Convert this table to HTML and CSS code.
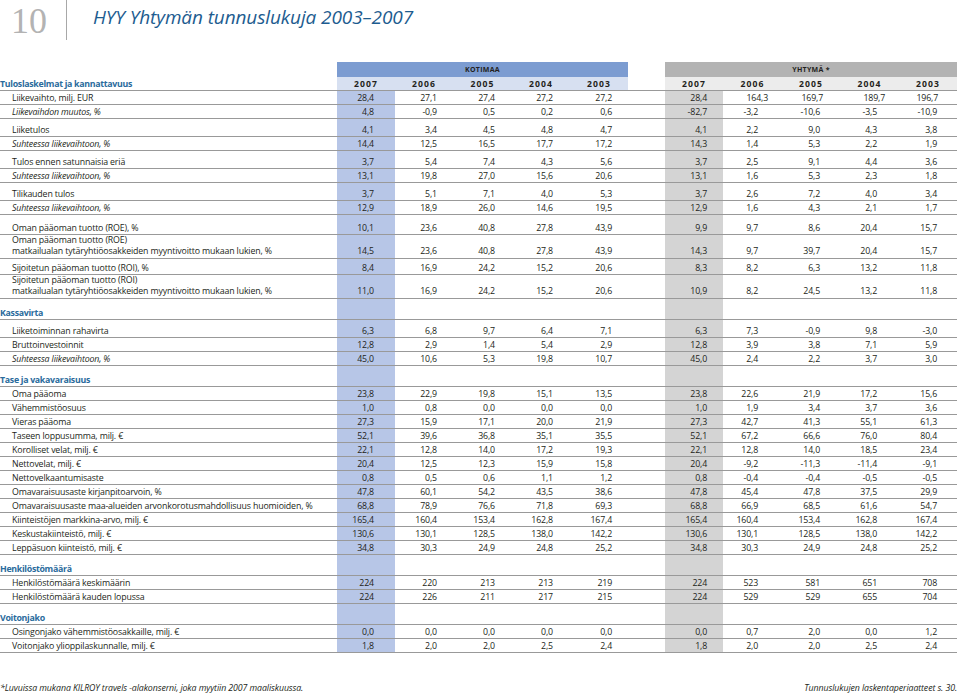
FILE: index.html
```html
<!DOCTYPE html>
<html lang="fi">
<head>
<meta charset="utf-8">
<title>HYY Yhtymän tunnuslukuja 2003–2007</title>
<link rel="stylesheet" href="styles.css">
</head>
<body>
<div class="top">
  <div class="pagenum">10</div>
  <div class="vline"></div>
  <h1 class="title">HYY Yhtymän tunnuslukuja 2003–2007</h1>
</div>
<table class="kt">
  <colgroup>
    <col class="cl"><col class="ck"><col class="ck"><col class="ck3"><col class="ck"><col class="ck">
    <col class="cg"><col class="ck"><col class="ck3"><col class="ck"><col class="ck3"><col class="ck">
  </colgroup>
  <thead>
    <tr class="band">
      <td></td><td colspan="5" class="bk">KOTIMAA</td><td></td><td colspan="5" class="by">YHTYMÄ *</td>
    </tr>
    <tr class="years">
      <td class="sh">Tuloslaskelmat ja kannattavuus</td>
      <td class="yk">2007</td><td class="yk">2006</td><td class="yk">2005</td><td class="yk">2004</td><td class="yk">2003</td>
      <td></td>
      <td class="yy">2007</td><td class="yy">2006</td><td class="yy">2005</td><td class="yy">2004</td><td class="yy">2003</td>
    </tr>
  </thead>
  <tbody class="up">
    <tr class="first"><td class="l">Liikevaihto, milj. EUR</td><td>28,4</td><td>27,1</td><td>27,4</td><td>27,2</td><td>27,2</td><td></td><td>28,4</td><td>164,3</td><td>169,7</td><td>189,7</td><td>196,7</td></tr>
    <tr class="it"><td class="l">Liikevaihdon muutos, %</td><td>4,8</td><td>-0,9</td><td>0,5</td><td>0,2</td><td>0,6</td><td></td><td>-82,7</td><td>-3,2</td><td>-10,6</td><td>-3,5</td><td>-10,9</td></tr>
    <tr class="g1"><td class="l">Liiketulos</td><td>4,1</td><td>3,4</td><td>4,5</td><td>4,8</td><td>4,7</td><td></td><td>4,1</td><td>2,2</td><td>9,0</td><td>4,3</td><td>3,8</td></tr>
    <tr class="it"><td class="l">Suhteessa liikevaihtoon, %</td><td>14,4</td><td>12,5</td><td>16,5</td><td>17,7</td><td>17,2</td><td></td><td>14,3</td><td>1,4</td><td>5,3</td><td>2,2</td><td>1,9</td></tr>
    <tr class="g1"><td class="l">Tulos ennen satunnaisia eriä</td><td>3,7</td><td>5,4</td><td>7,4</td><td>4,3</td><td>5,6</td><td></td><td>3,7</td><td>2,5</td><td>9,1</td><td>4,4</td><td>3,6</td></tr>
    <tr class="it"><td class="l">Suhteessa liikevaihtoon, %</td><td>13,1</td><td>19,8</td><td>27,0</td><td>15,6</td><td>20,6</td><td></td><td>13,1</td><td>1,6</td><td>5,3</td><td>2,3</td><td>1,8</td></tr>
    <tr class="g1"><td class="l">Tilikauden tulos</td><td>3,7</td><td>5,1</td><td>7,1</td><td>4,0</td><td>5,3</td><td></td><td>3,7</td><td>2,6</td><td>7,2</td><td>4,0</td><td>3,4</td></tr>
    <tr class="it"><td class="l">Suhteessa liikevaihtoon, %</td><td>12,9</td><td>18,9</td><td>26,0</td><td>14,6</td><td>19,5</td><td></td><td>12,9</td><td>1,6</td><td>4,3</td><td>2,1</td><td>1,7</td></tr>
    <tr class="g2"><td class="l">Oman pääoman tuotto (ROE), %</td><td>10,1</td><td>23,6</td><td>40,8</td><td>27,8</td><td>43,9</td><td></td><td>9,9</td><td>9,7</td><td>8,6</td><td>20,4</td><td>15,7</td></tr>
    <tr class="two"><td class="l">Oman pääoman tuotto (ROE)<br>matkailualan tytäryhtiöosakkeiden myyntivoitto mukaan lukien, %</td><td>14,5</td><td>23,6</td><td>40,8</td><td>27,8</td><td>43,9</td><td></td><td>14,3</td><td>9,7</td><td>39,7</td><td>20,4</td><td>15,7</td></tr>
    <tr class="g3"><td class="l">Sijoitetun pääoman tuotto (ROI), %</td><td>8,4</td><td>16,9</td><td>24,2</td><td>15,2</td><td>20,6</td><td></td><td>8,3</td><td>8,2</td><td>6,3</td><td>13,2</td><td>11,8</td></tr>
    <tr class="two"><td class="l">Sijoitetun pääoman tuotto (ROI)<br>matkailualan tytäryhtiöosakkeiden myyntivoitto mukaan lukien, %</td><td>11,0</td><td>16,9</td><td>24,2</td><td>15,2</td><td>20,6</td><td></td><td>10,9</td><td>8,2</td><td>24,5</td><td>13,2</td><td>11,8</td></tr>
  </tbody>
  <tbody class="low">
    <tr class="head"><td class="sh">Kassavirta</td><td></td><td></td><td></td><td></td><td></td><td></td><td></td><td></td><td></td><td></td><td></td></tr>
    <tr class="g1"><td class="l">Liiketoiminnan rahavirta</td><td>6,3</td><td>6,8</td><td>9,7</td><td>6,4</td><td>7,1</td><td></td><td>6,3</td><td>7,3</td><td>-0,9</td><td>9,8</td><td>-3,0</td></tr>
    <tr><td class="l">Bruttoinvestoinnit</td><td>12,8</td><td>2,9</td><td>1,4</td><td>5,4</td><td>2,9</td><td></td><td>12,8</td><td>3,9</td><td>3,8</td><td>7,1</td><td>5,9</td></tr>
    <tr class="it"><td class="l">Suhteessa liikevaihtoon, %</td><td>45,0</td><td>10,6</td><td>5,3</td><td>19,8</td><td>10,7</td><td></td><td>45,0</td><td>2,4</td><td>2,2</td><td>3,7</td><td>3,0</td></tr>
    <tr class="head"><td class="sh">Tase ja vakavaraisuus</td><td></td><td></td><td></td><td></td><td></td><td></td><td></td><td></td><td></td><td></td><td></td></tr>
    <tr><td class="l">Oma pääoma</td><td>23,8</td><td>22,9</td><td>19,8</td><td>15,1</td><td>13,5</td><td></td><td>23,8</td><td>22,6</td><td>21,9</td><td>17,2</td><td>15,6</td></tr>
    <tr><td class="l">Vähemmistöosuus</td><td>1,0</td><td>0,8</td><td>0,0</td><td>0,0</td><td>0,0</td><td></td><td>1,0</td><td>1,9</td><td>3,4</td><td>3,7</td><td>3,6</td></tr>
    <tr><td class="l">Vieras pääoma</td><td>27,3</td><td>15,9</td><td>17,1</td><td>20,0</td><td>21,9</td><td></td><td>27,3</td><td>42,7</td><td>41,3</td><td>55,1</td><td>61,3</td></tr>
    <tr><td class="l">Taseen loppusumma, milj. €</td><td>52,1</td><td>39,6</td><td>36,8</td><td>35,1</td><td>35,5</td><td></td><td>52,1</td><td>67,2</td><td>66,6</td><td>76,0</td><td>80,4</td></tr>
    <tr><td class="l">Korolliset velat, milj. €</td><td>22,1</td><td>12,8</td><td>14,0</td><td>17,2</td><td>19,3</td><td></td><td>22,1</td><td>12,8</td><td>14,0</td><td>18,5</td><td>23,4</td></tr>
    <tr><td class="l">Nettovelat, milj. €</td><td>20,4</td><td>12,5</td><td>12,3</td><td>15,9</td><td>15,8</td><td></td><td>20,4</td><td>-9,2</td><td>-11,3</td><td>-11,4</td><td>-9,1</td></tr>
    <tr><td class="l">Nettovelkaantumisaste</td><td>0,8</td><td>0,5</td><td>0,6</td><td>1,1</td><td>1,2</td><td></td><td>0,8</td><td>-0,4</td><td>-0,4</td><td>-0,5</td><td>-0,5</td></tr>
    <tr><td class="l">Omavaraisuusaste kirjanpitoarvoin, %</td><td>47,8</td><td>60,1</td><td>54,2</td><td>43,5</td><td>38,6</td><td></td><td>47,8</td><td>45,4</td><td>47,8</td><td>37,5</td><td>29,9</td></tr>
    <tr><td class="l">Omavaraisuusaste maa-alueiden arvonkorotusmahdollisuus huomioiden, %</td><td>68,8</td><td>78,9</td><td>76,6</td><td>71,8</td><td>69,3</td><td></td><td>68,8</td><td>66,9</td><td>68,5</td><td>61,6</td><td>54,7</td></tr>
    <tr><td class="l">Kiinteistöjen markkina-arvo, milj. €</td><td>165,4</td><td>160,4</td><td>153,4</td><td>162,8</td><td>167,4</td><td></td><td>165,4</td><td>160,4</td><td>153,4</td><td>162,8</td><td>167,4</td></tr>
    <tr><td class="l">Keskustakiinteistö, milj. €</td><td>130,6</td><td>130,1</td><td>128,5</td><td>138,0</td><td>142,2</td><td></td><td>130,6</td><td>130,1</td><td>128,5</td><td>138,0</td><td>142,2</td></tr>
    <tr><td class="l">Leppäsuon kiinteistö, milj. €</td><td>34,8</td><td>30,3</td><td>24,9</td><td>24,8</td><td>25,2</td><td></td><td>34,8</td><td>30,3</td><td>24,9</td><td>24,8</td><td>25,2</td></tr>
    <tr class="head"><td class="sh">Henkilöstömäärä</td><td></td><td></td><td></td><td></td><td></td><td></td><td></td><td></td><td></td><td></td><td></td></tr>
    <tr><td class="l">Henkilöstömäärä keskimäärin</td><td>224</td><td>220</td><td>213</td><td>213</td><td>219</td><td></td><td>224</td><td>523</td><td>581</td><td>651</td><td>708</td></tr>
    <tr><td class="l">Henkilöstömäärä kauden lopussa</td><td>224</td><td>226</td><td>211</td><td>217</td><td>215</td><td></td><td>224</td><td>529</td><td>529</td><td>655</td><td>704</td></tr>
    <tr class="head"><td class="sh">Voitonjako</td><td></td><td></td><td></td><td></td><td></td><td></td><td></td><td></td><td></td><td></td><td></td></tr>
    <tr><td class="l">Osingonjako vähemmistöosakkaille, milj. €</td><td>0,0</td><td>0,0</td><td>0,0</td><td>0,0</td><td>0,0</td><td></td><td>0,0</td><td>0,7</td><td>2,0</td><td>0,0</td><td>1,2</td></tr>
    <tr><td class="l">Voitonjako ylioppilaskunnalle, milj. €</td><td>1,8</td><td>2,0</td><td>2,0</td><td>2,5</td><td>2,4</td><td></td><td>1,8</td><td>2,0</td><td>2,0</td><td>2,5</td><td>2,4</td></tr>
  </tbody>
</table>
<div class="foot">
  <span>*Luvuissa mukana KILROY travels -alakonserni, joka myytiin 2007 maaliskuussa.</span>
  <span>Tunnuslukujen laskentaperiaatteet s. 30.</span>
</div>
</body>
</html>
```
FILE: styles.css
```css
html, body {
  margin: 0;
  padding: 0;
  background: #ffffff;
}
body {
  width: 960px;
  height: 693px;
  overflow: hidden;
  font-family: "Open Sans", "Noto Sans", sans-serif;
  color: #231f20;
}

/* page header */
.top {
  display: flex;
  align-items: flex-start;
  height: 62px;
}
.pagenum {
  width: 55px;
  margin: 3px 0 0 11px;
  font-family: "Liberation Serif", serif;
  font-size: 36px;
  line-height: 36px;
  color: #b3b3b3;
}
.vline {
  width: 1px;
  height: 40px;
  background: #a8a8a8;
}
.title {
  margin: 4px 0 0 26px;
  font-size: 19px;
  line-height: 26px;
  font-weight: normal;
  font-style: italic;
  color: #1d5c8f;
  letter-spacing: -0.1px;
}

/* key figure table */
.kt {
  border-collapse: collapse;
  table-layout: fixed;
  width: 957px;
}
.cl { width: 337px; }
.ck { width: 58px; }
.ck3 { width: 59px; }
.cg { width: 37px; }

.kt td {
  padding: 0;
  vertical-align: bottom;
  white-space: nowrap;
  font-size: 8.8px;
  line-height: 12px;
  letter-spacing: -0.15px;
  text-align: right;
}
.kt td.l {
  padding-left: 12px;
  text-align: left;
}
.kt tbody td {
  border-bottom: 1px solid #999999;
  height: 13px;
}

/* column band headers */
.band td {
  height: 15px;
  padding: 0;
  font-size: 7px;
  font-weight: bold;
  letter-spacing: 0.3px;
  text-align: center;
  vertical-align: middle;
  line-height: 15px;
}
.band .bk { background: #7c9cd1; }
.band .by { background: #b3b3b3; }
.years td {
  height: 13px;
  border-bottom: 1px solid #999999;
  text-align: center;
  font-weight: bold;
  font-size: 8.6px;
  letter-spacing: 1.1px;
}
.years .yk { background: #d7e0f1; }
.years .yy { background: #ececec; }
.kt td.sh {
  padding-left: 0;
  text-align: left;
  font-weight: bold;
  font-size: 8.8px;
  letter-spacing: -0.3px;
  color: #2a6b9c;
}

/* highlighted 2007 columns */
.kt tbody td:nth-child(2) { background: #b7c6e7; }
.kt tbody td:nth-child(8) { background: #d4d4d4; }

/* number alignment */
.kt tbody td:nth-child(2) { padding-right: 21px; }
.kt tbody td:nth-child(3) { padding-right: 16px; }
.kt tbody td:nth-child(4) { padding-right: 17px; }
.kt tbody td:nth-child(5) { padding-right: 17px; }
.kt tbody td:nth-child(6) { padding-right: 16px; }
.kt tbody td:nth-child(8) { padding-right: 16px; }
.kt tbody td:nth-child(9) { padding-right: 24px; }
.kt tbody td:nth-child(10) { padding-right: 20px; }
.kt tbody td:nth-child(11) { padding-right: 22px; }
.kt tbody td:nth-child(12) { padding-right: 20px; }
.up td:nth-child(9) { padding-right: 38px; }
.up td:nth-child(10) { padding-right: 27px; }
.up td:nth-child(11) { padding-right: 25px; }
.up .first td:nth-child(9) { padding-right: 14px; }
.up .first td:nth-child(10) { padding-right: 17px; }
.up .first td:nth-child(11) { padding-right: 14px; }
.up .first td:nth-child(12) { padding-right: 19px; }

/* row variants */
.kt tr.it td.l { font-style: italic; }
.kt tr.g1 td { height: 17px; }
.kt tr.g2 td { height: 19px; }
.kt tr.g3 td { height: 15px; }
.kt tr.two td { height: 22px; padding-bottom: 1px; }
.kt tr.two td.l { line-height: 11px; }
.kt tr.head td { height: 20px; }

/* footer */
.foot {
  display: flex;
  justify-content: space-between;
  width: 957px;
  margin-top: 29px;
  font-size: 8.8px;
  font-style: italic;
  line-height: 12px;
  letter-spacing: -0.1px;
}
```
